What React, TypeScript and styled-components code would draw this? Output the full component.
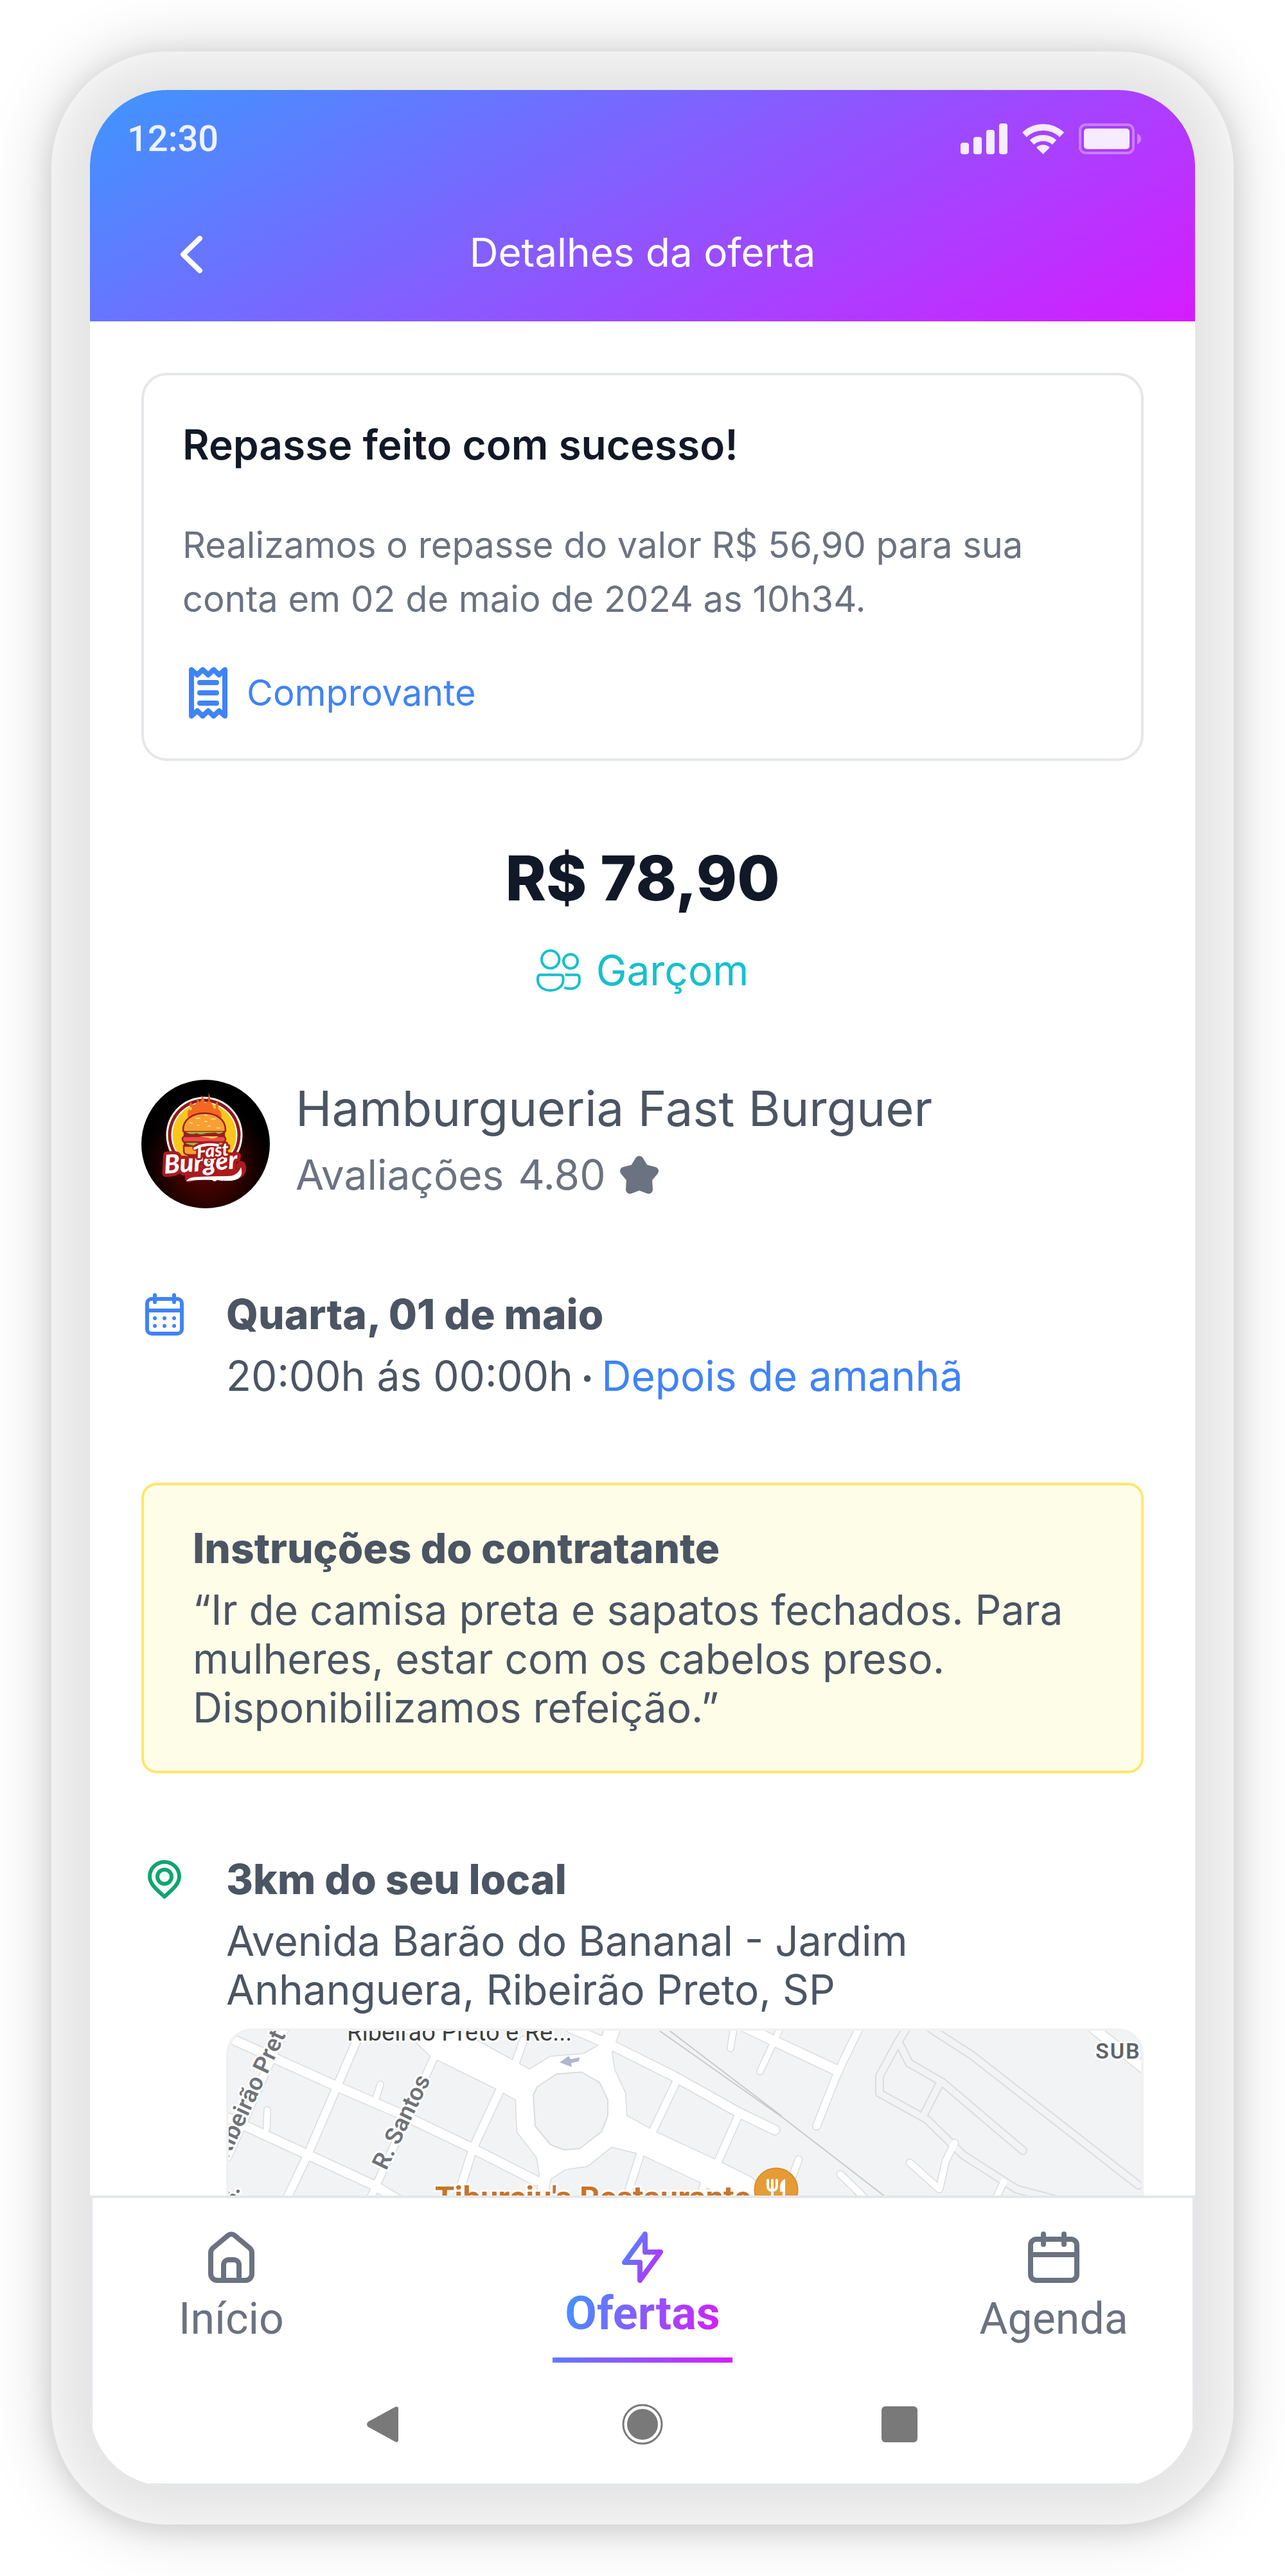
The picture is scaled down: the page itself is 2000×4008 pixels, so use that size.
import React from "react";
import styled, { createGlobalStyle, css } from "styled-components";

const INTER = `Inter, "Open Sans", sans-serif`;
const ROBOTO = `Roboto, "Open Sans", sans-serif`;

const color = {
  ink: "#111827",
  text: "#4b5563",
  muted: "#6b7280",
  blue: "#3f83f8",
  cyan: "#17bfce",
  green: "#0fa56f",
  line: "#e5e7eb",
};

const brand = "linear-gradient(150deg, #3e96ff 0%, #d61cff 100%)";

const GlobalStyle = createGlobalStyle`
  *, *::before, *::after { box-sizing: border-box; }
  body { margin: 0; background: #fff; font-family: ${INTER}; color: ${color.text}; }
  h1, h2, h3, p { margin: 0; }
  a { color: inherit; text-decoration: none; }
  button { border: 0; padding: 0; background: none; color: inherit; font: inherit; cursor: pointer; }
  svg { display: block; flex: none; }
`;

const Page = styled.div`
  padding: 80px;
`;

const Phone = styled.div`
  padding: 60px;
  border-radius: 180px;
  background: #e4e4e4;
  box-shadow:
    inset 0 0 90px #fff,
    0 0 100px rgba(0, 0, 0, 0.18),
    0 8px 40px rgba(0, 0, 0, 0.1);
`;

const Screen = styled.div`
  display: flex;
  flex-direction: column;
  overflow: hidden;
  border-radius: 120px;
  background: #fff;
`;

const Header = styled.header`
  padding-bottom: 6px;
  background: ${brand};
  color: #fff;
`;

const StatusBar = styled.div`
  display: flex;
  align-items: center;
  justify-content: space-between;
  height: 152px;
  padding: 0 84px 0 58px;
  color: rgba(255, 255, 255, 0.9);
  font: 500 56px/64px ${ROBOTO};
`;

const StatusIcons = styled.div`
  display: flex;
  gap: 23px;
`;

const TitleBar = styled.div`
  display: grid;
  grid-template-columns: 1fr auto 1fr;
  align-items: center;
  height: 202px;
  padding: 0 110px;
`;

const BackButton = styled.button`
  display: grid;
  place-items: center;
  width: 96px;
  height: 96px;
`;

const ScreenTitle = styled.h1`
  font-weight: 400;
  font-size: 62px;
  line-height: 80px;
`;

const Main = styled.main`
  padding: 80px 80px 0;
`;

const Notice = styled.section`
  padding: 64px 60px 62px;
  border: 4px solid ${color.line};
  border-radius: 40px;
`;

const NoticeTitle = styled.h2`
  color: ${color.ink};
  font-weight: 600;
  font-size: 64px;
  line-height: 88px;
`;

const NoticeText = styled.p`
  margin: 70px 0 64px;
  color: ${color.muted};
  font-size: 56px;
  line-height: 84px;
`;

const ReceiptLink = styled.a`
  display: inline-flex;
  align-items: center;
  gap: 20px;
  color: ${color.blue};
  font-size: 56px;
  line-height: 80px;
  vertical-align: top;
`;

const Summary = styled.section`
  display: flex;
  flex-direction: column;
  align-items: center;
  gap: 46px;
  margin-top: 124px;
`;

const Price = styled.p`
  color: ${color.ink};
  font-weight: 800;
  font-size: 96px;
  line-height: 116px;
`;

const Role = styled.p`
  display: flex;
  align-items: center;
  gap: 24px;
  color: ${color.cyan};
  font-size: 64px;
  line-height: 80px;
`;

const Company = styled.section`
  display: flex;
  gap: 40px;
  margin-top: 130px;
`;

const CompanyName = styled.h2`
  font-weight: 400;
  font-size: 76px;
  line-height: 88px;
`;

const Rating = styled.p`
  display: flex;
  align-items: center;
  gap: 22px;
  margin-top: 20px;
  color: ${color.muted};
  font-size: 64px;
  line-height: 80px;
`;

const InfoRow = styled.section`
  display: grid;
  grid-template-columns: 72px minmax(0, 1fr);
  column-gap: 60px;
  margin-top: 125px;
`;

const IconSlot = styled.div`
  display: flex;
  align-items: center;
  height: 80px;
`;

const BlockTitle = styled.h3`
  font-weight: 800;
  font-size: 64px;
  line-height: 80px;
`;

const BlockText = styled.p`
  margin-top: 18px;
  font-size: 64px;
  line-height: 76px;
`;

const Dot = styled.b`
  font-weight: 800;
  font-size: 56px;
  line-height: 1;
`;

const Accent = styled.span`
  color: ${color.blue};
`;

const Instructions = styled.section`
  margin-top: 128px;
  padding: 58px 76px 60px;
  border: 4px solid #ffe66b;
  border-radius: 24px;
  background: #fefde8;
`;

const MapFrame = styled.div`
  height: 260px;
  margin-top: 22px;
  overflow: hidden;
  border: 4px solid #f1f1f1;
  border-bottom: 0;
  border-radius: 40px 40px 0 0;
  background: #f1f3f5;
`;

const BottomArea = styled.footer`
  border: 4px solid ${color.line};
  background: #fff;
`;

const Tabs = styled.nav`
  display: flex;
  justify-content: space-between;
  padding: 52px 76px 0;
`;

const Tab = styled.a<{ $active?: boolean }>`
  display: flex;
  flex-direction: column;
  align-items: center;
  gap: 16px;
  width: 280px;
  height: 204px;
  color: ${color.muted};
  font: 400 68px/80px ${ROBOTO};
  ${(p) =>
    p.$active &&
    css`
      gap: 8px;
      font-size: 72px;
      font-weight: 700;
      border-bottom: 8px solid;
      border-image: linear-gradient(90deg, #5f7bff, #d61cff) 1;
    `}
`;

const GradientLabel = styled.span`
  background: linear-gradient(110deg, #3e96ff 0%, #d61cff 100%);
  background-clip: text;
  -webkit-background-clip: text;
  color: transparent;
`;

const SystemBar = styled.div`
  display: flex;
  justify-content: center;
  gap: 336px;
  padding: 64px 0 60px;
  color: #797979;
`;

const Signal = () => (
  <svg width="73" height="48" viewBox="0 0 73 48" fill="currentColor" aria-hidden="true">
    <rect x="0" y="30" width="13" height="18" rx="4" />
    <rect x="20" y="21" width="13" height="27" rx="4" />
    <rect x="40" y="10" width="13" height="38" rx="4" />
    <rect x="60" y="0" width="13" height="48" rx="4" />
  </svg>
);

const Wifi = () => (
  <svg width="65" height="48" viewBox="0 0 65 48" fill="none" stroke="currentColor" aria-hidden="true">
    <path d="M3.3 17.6A42.5 42.5 0 0 1 61.7 17.6" strokeWidth="10" />
    <path d="M15 29.4A26 26 0 0 1 50 29.4" strokeWidth="9.5" />
    <path d="M23.5 37.6A14 14 0 0 1 41.5 37.6L32.5 46.6Z" fill="currentColor" strokeWidth="2" strokeLinejoin="round" />
  </svg>
);

const Battery = () => (
  <svg width="97" height="48" viewBox="0 0 97 48" fill="currentColor" aria-hidden="true">
    <rect x="2" y="2" width="83" height="44" rx="9" fill="none" stroke="currentColor" strokeWidth="4" opacity="0.38" />
    <rect x="8" y="8" width="71" height="32" rx="5" />
    <path d="M91 15.500Q97 18 97 24T91 32.500Z" opacity="0.42" />
  </svg>
);

const Chevron = () => (
  <svg width="96" height="96" viewBox="0 0 96 96" fill="none" stroke="#fff" strokeWidth="8" strokeLinecap="round" strokeLinejoin="round" aria-hidden="true">
    <path d="M61 26L35 51L61 76" />
  </svg>
);

const ReceiptIcon = () => (
  <svg width="80" height="80" viewBox="0 0 80 80" fill="none" stroke="currentColor" strokeWidth="8" strokeLinecap="round" strokeLinejoin="round" aria-hidden="true">
    <path d="M14 4L23 12L31.500 4L40 12L48.500 4L57 12L66 4V76L57 68L48.500 76L40 68L31.500 76L23 68L14 76Z" />
    <path d="M27 24H53M27 40H53M27 56H53" />
  </svg>
);

const PeopleIcon = () => (
  <svg width="69" height="66" viewBox="0 0 69 66" fill="none" stroke="currentColor" strokeWidth="4" aria-hidden="true">
    <circle cx="21.700" cy="15.800" r="13.700" />
    <circle cx="53" cy="18.700" r="11" />
    <path d="M6.500 39.700H37Q41.500 39.700 41.500 44.200V48C41.500 58 32 64 21.700 64S2 58 2 48V44.200Q2 39.700 6.500 39.700Z" />
    <path d="M44.500 39.700H62.500Q66.800 39.700 66.800 44.200V48.500C66.800 57 60.500 61.300 52 61.300Q47 61.300 43.200 59.500" />
  </svg>
);

const StarIcon = () => (
  <svg width="60" height="60" viewBox="0 0 60 60" fill="currentColor" stroke="currentColor" strokeWidth="13" strokeLinejoin="round" aria-hidden="true">
    <path d="M30 7L38 20L53.500 24L43.500 36L44.500 53L30 47.500L15.500 53L16.500 36L6.500 24L22 20Z" />
  </svg>
);

const DateIcon = () => (
  <svg width="72" height="72" viewBox="0 0 72 72" fill="none" stroke={color.blue} strokeWidth="6" strokeLinecap="round" aria-hidden="true">
    <rect x="9" y="12" width="54" height="54" rx="7" />
    <path d="M9 30H63M21 6V17M51 6V17" />
    <path d="M21 42h.01M36 42h.01M51 42h.01M21 54h.01M36 54h.01M51 54h.01" />
  </svg>
);

const PinIcon = () => (
  <svg width="72" height="72" viewBox="0 0 72 72" fill="none" stroke={color.green} strokeWidth="6" strokeLinejoin="round" aria-hidden="true">
    <path d="M36 63C26 54 13 44 13 32A23 23 0 0 1 59 32C59 44 46 54 36 63Z" />
    <circle cx="36" cy="32" r="11" />
  </svg>
);

const HomeIcon = () => (
  <svg width="80" height="80" viewBox="0 0 80 80" fill="none" stroke="currentColor" strokeWidth="8" strokeLinecap="round" strokeLinejoin="round" aria-hidden="true">
    <path d="M8 33C8 30 9 28 11 26L35 6C38 3.500 42 3.500 45 6L69 26C71 28 72 30 72 33V66A10 10 0 0 1 62 76H18A10 10 0 0 1 8 66Z" />
    <path d="M28 76V52A8 8 0 0 1 36 44H44A8 8 0 0 1 52 52V76" strokeLinecap="butt" />
  </svg>
);

const BoltIcon = () => (
  <svg width="80" height="80" viewBox="0 0 80 80" fill="none" stroke="url(#bolt)" strokeWidth="8" strokeLinejoin="round" aria-hidden="true">
    <defs>
      <linearGradient id="bolt" x1="8" y1="22" x2="72" y2="58" gradientUnits="userSpaceOnUse">
        <stop offset="0" stopColor="#4a8aff" />
        <stop offset="1" stopColor="#c02aff" />
      </linearGradient>
    </defs>
    <path d="M44 4V32H68L36 76V48H12Z" />
  </svg>
);

const AgendaIcon = () => (
  <svg width="80" height="80" viewBox="0 0 80 80" fill="none" stroke="currentColor" strokeWidth="8" strokeLinecap="round" aria-hidden="true">
    <rect x="4" y="12" width="72" height="64" rx="9" />
    <path d="M4 36H76M24 4V20M56 4V20" />
  </svg>
);

const Logo = () => (
  <svg width="200" height="200" viewBox="0 0 200 200" role="img" aria-label="Fast Burger">
    <defs>
      <radialGradient id="glow" cx="0.5" cy="0.68" r="0.5">
        <stop offset="0" stopColor="#5c0500" />
        <stop offset="0.55" stopColor="#2e0200" />
        <stop offset="1" stopColor="#000" />
      </radialGradient>
    </defs>
    <circle cx="100" cy="100" r="100" fill="url(#glow)" />
    <circle cx="98" cy="86" r="59.500" fill="#fff" />
    <circle cx="98" cy="86" r="56.500" fill="#8f191b" />
    <circle cx="98" cy="86" r="51.500" fill="#fff" />
    <circle cx="98" cy="86" r="49.500" fill="#fac61d" />
    <path d="M74 62Q70 53 74 46Q78 50 79 44Q72 41 77 34Q79 41 84 38Q88 35 86 30Q90 33 91 35Q95 30 93 24Q99 29 98 36L103 35Q106 31 103 29Q106 26 104 20Q109 27 106 33Q110 35 111 40Q113 48 116 44Q114 37 118 34Q121 40 119 45Q125 49 125 58L122 64Z" fill="#f26822" />
    <g stroke="#97201d" strokeWidth="2.500">
      <path d="M65 79C63 44 132 42 131 79Q131 81 128 81H68Q65 81 65 79Z" fill="#f99f31" />
      <path d="M67 82H129V90H67Z" fill="#97201d" />
      <path d="M67 97H129V105H67Z" fill="#97201d" />
      <rect x="64" y="88" width="67" height="9" rx="4" fill="#ee4b48" />
      <path d="M66 103H129V111Q129 117 121 117H75Q66 117 66 111Z" fill="#f99f31" />
    </g>
    <path d="M69 81H128Q121 87 116 82Q104 83 101 83Q91 87 86 83Q77 87 69 81ZM68 98H128Q124 104 115 100Q104 105 94 101Q79 105 68 98Z" fill="#9ab53c" />
    <path d="M90 88H120Q111 94 104 90Z" fill="#fdd24f" />
    <g stroke="#fdd887" strokeWidth="2" strokeLinecap="round">
      <path d="M85 60h6M99 55h3M109 61h6M76 67h3M99 65h3M87 71h3M104 72h3M118 75h4" />
    </g>
    <path d="M75 152Q96 142 120 146L148 147Q158 144 155 134" fill="none" stroke="#aa1b1e" strokeWidth="15" strokeLinecap="round" />
    <path d="M84 106Q98 97 117 101" fill="none" stroke="#aa1b1e" strokeWidth="9" strokeLinecap="round" />
    <g fontFamily="Lato, sans-serif" fontStyle="italic" fontWeight="900" strokeLinejoin="round" paintOrder="stroke" stroke="#aa1b1e" fill="#fff">
      <text x="36" y="146" fontSize="40" strokeWidth="10" transform="rotate(-4 36 146)">Burger</text>
      <text x="87" y="122" fontSize="28" strokeWidth="6" transform="rotate(-5 87 122)">Fast</text>
    </g>
    <path d="M83 107Q98 98 119 102" fill="none" stroke="#fff" strokeWidth="4" strokeLinecap="round" />
    <path d="M70 158Q73 151 90 151Q111 150 134 150Q150 150 155 136Q161 154 141 157Q127 158 118 156Q114 160 110 156Q87 155 70 158Z" fill="#fff" />
  </svg>
);

/* Streets of the district: path and width in pixels. */
const streets: Array<[string, number]> = [
  ["M-10 8L174 91L267 131L384 187L482 237", 14],
  ["M0 138L128 197L230 244L270 268", 14],
  ["M207 10L174 87L128 194L92 270", 12],
  ["M324 44L249 210L222 270", 11],
  ["M428 92L384 187L358 270", 12],
  ["M463 18L448 60", 11],
  ["M240 87L232 112", 9],
  ["M64 127L63 156", 9],
  ["M94 -6L2 200", 12],
  ["M537 0L602 27L696 74L798 131L854 158", 14],
  ["M701 82L663 162", 11],
  ["M798 134L766 206", 11],
  ["M645 194L621 270", 11],
  ["M745 238L736 270", 11],
  ["M891 204L876 245", 10],
  ["M808 -2L854 20L952 66", 15],
  ["M986 -2L952 68L919 152", 11],
  ["M860 5L831 67", 9],
  ["M790 0L785 31", 9],
  ["M1350 0L1428 62", 15],
  ["M1134 178L1120 206L1110 250L1064 209", 10],
  ["M956 227L1000 270", 10],
  ["M1210 239L1196 270", 10],
];

const lanes = [
  "M1059 0L1044 24L1017 74V101L1091 142L1147 197L1230 250L1290 266",
  "M1048 24L1063 54L1115 84L1240 190",
  "M1110 87L1087 132",
  "M1096 0L1161 42L1420 244",
];

const junction =
  "M270 -4L352 -2L472 64L505 44L556 40L579 27L590 0H614L600 37L604 64L621 101L623 136L668 161L765 206L817 232L860 270H778L742 241L644 195L600 184L562 214L528 219L505 234L498 270H482L488 227L484 201L453 161L451 111L421 94L319 44Z";

const island = "M514 71L553 68L581 84L594 111V136L584 161L550 187L526 189L505 181L481 152L478 104L484 91Z";

const CityMap = () => (
  <svg width="100%" height="260" viewBox="4 4 1420 260" preserveAspectRatio="xMinYMin slice" role="img" aria-label="Mapa do local">
    <g fill="none" strokeLinejoin="round" strokeLinecap="round">
      <g stroke="#dadce0">
        {streets.map(([d, w]) => (
          <path key={d} d={d} strokeWidth={w + 3} />
        ))}
        <path d={junction} strokeWidth="3" />
        {lanes.map((d) => (
          <path key={d} d={d} strokeWidth="14" />
        ))}
      </g>
      <g stroke="#f1f3f5" strokeWidth="10">
        {lanes.map((d) => (
          <path key={d} d={d} />
        ))}
      </g>
      <path d={junction} fill="#fff" />
      <g stroke="#fff">
        {streets.map(([d, w]) => (
          <path key={d} d={d} strokeWidth={w} />
        ))}
      </g>
      <path d={island} fill="#f1f3f5" stroke="#dadce0" strokeWidth="2" />
      <path d="M672 2L868 140L1026 262M688 2L864 136" stroke="#c8cacd" strokeWidth="2" />
    </g>
    <path d="M519 53L533 43L536 48L550 45L549 51L537 54L538 60Z" fill="#b0b5d0" />
    <g fontFamily='Roboto, "Open Sans", sans-serif' stroke="#fff" strokeWidth="6" strokeLinejoin="round" paintOrder="stroke">
      <g fill="#6f7378" fontWeight="600" fontSize="37">
        <text x="2" y="205" transform="rotate(-65 2 205)">Ribeirão Pret</text>
        <text x="249" y="222" transform="rotate(-64 249 222)">R. Santos</text>
        <text x="10" y="276" transform="rotate(-64 10 276)">s.</text>
      </g>
      <text x="188" y="19" fontSize="38" fill="#3c4043">Ribeirão Preto e Re...</text>
      <text x="1353" y="47" fontSize="34" fontWeight="600" letterSpacing="2" fill="#5f6368">SUB</text>
      <text x="325" y="280" fontSize="49" fontWeight="700" fill="#c8752a">Tiburciu's Restaurante</text>
    </g>
    <circle cx="856" cy="251" r="33.500" fill="#e59c36" stroke="#d98c2a" strokeWidth="2" />
    <path d="M843 236V245Q843 252 850 252V264M850 236V250M857 236V245Q857 252 850 252" fill="none" stroke="#fff" strokeWidth="4" strokeLinecap="round" />
    <path d="M870 234Q862 237 862 248V254H866V266H870Z" fill="#fff" />
  </svg>
);

export default function App() {
  return (
    <>
      <GlobalStyle />
      <Page>
        <Phone>
          <Screen>
            <Header>
              <StatusBar>
                <time>12:30</time>
                <StatusIcons>
                  <Signal />
                  <Wifi />
                  <Battery />
                </StatusIcons>
              </StatusBar>
              <TitleBar>
                <BackButton type="button" aria-label="Voltar">
                  <Chevron />
                </BackButton>
                <ScreenTitle>Detalhes da oferta</ScreenTitle>
              </TitleBar>
            </Header>

            <Main>
              <Notice>
                <NoticeTitle>Repasse feito com sucesso!</NoticeTitle>
                <NoticeText>
                  Realizamos o repasse do valor R$ 56,90 para sua conta em 02 de maio de 2024 as 10h34.
                </NoticeText>
                <ReceiptLink href="#comprovante">
                  <ReceiptIcon />
                  Comprovante
                </ReceiptLink>
              </Notice>

              <Summary>
                <Price>R$ 78,90</Price>
                <Role>
                  <PeopleIcon />
                  Garçom
                </Role>
              </Summary>

              <Company>
                <Logo />
                <div>
                  <CompanyName>Hamburgueria Fast Burguer</CompanyName>
                  <Rating>
                    <span>Avaliações</span>
                    <span>4.80</span>
                    <StarIcon />
                  </Rating>
                </div>
              </Company>

              <InfoRow>
                <IconSlot>
                  <DateIcon />
                </IconSlot>
                <div>
                  <BlockTitle>Quarta, 01 de maio</BlockTitle>
                  <BlockText>
                    20:00h ás 00:00h<Dot> · </Dot>
                    <Accent>Depois de amanhã</Accent>
                  </BlockText>
                </div>
              </InfoRow>

              <Instructions>
                <BlockTitle>Instruções do contratante</BlockTitle>
                <BlockText>
                  “Ir de camisa preta e sapatos fechados. Para mulheres, estar com os cabelos preso.
                  Disponibilizamos refeição.”
                </BlockText>
              </Instructions>

              <InfoRow>
                <IconSlot>
                  <PinIcon />
                </IconSlot>
                <div>
                  <BlockTitle>3km do seu local</BlockTitle>
                  <BlockText>Avenida Barão do Bananal - Jardim Anhanguera, Ribeirão Preto, SP</BlockText>
                  <MapFrame>
                    <CityMap />
                  </MapFrame>
                </div>
              </InfoRow>
            </Main>

            <BottomArea>
              <Tabs>
                <Tab href="#inicio">
                  <HomeIcon />
                  Início
                </Tab>
                <Tab href="#ofertas" $active aria-current="page">
                  <BoltIcon />
                  <GradientLabel>Ofertas</GradientLabel>
                </Tab>
                <Tab href="#agenda">
                  <AgendaIcon />
                  Agenda
                </Tab>
              </Tabs>
              <SystemBar>
                <button type="button" aria-label="Voltar do sistema">
                  <svg width="64" height="64" viewBox="0 0 64 64" fill="currentColor">
                    <path d="M5 28L47 5Q52 3 52 8V56Q52 61 47 59L5 36Q1 32 5 28Z" />
                  </svg>
                </button>
                <button type="button" aria-label="Tela inicial">
                  <svg width="64" height="64" viewBox="0 0 64 64" fill="currentColor">
                    <circle cx="32" cy="32" r="30" fill="none" stroke="currentColor" strokeWidth="3" />
                    <circle cx="32" cy="32" r="24" />
                  </svg>
                </button>
                <button type="button" aria-label="Aplicativos recentes">
                  <svg width="64" height="64" viewBox="0 0 64 64" fill="currentColor">
                    <rect x="4" y="4" width="56" height="56" rx="6" />
                  </svg>
                </button>
              </SystemBar>
            </BottomArea>
          </Screen>
        </Phone>
      </Page>
    </>
  );
}
